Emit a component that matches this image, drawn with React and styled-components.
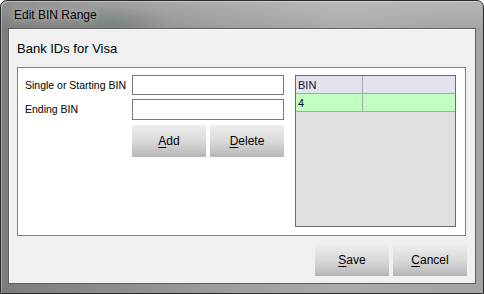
import React from "react";
import styled, { createGlobalStyle } from "styled-components";

const GlobalStyle = createGlobalStyle`
  html, body {
    margin: 0;
    padding: 0;
    background: #ffffff;
  }
  body {
    font-family: "Liberation Sans", Arial, sans-serif;
  }
`;

const Window = styled.div`
  box-sizing: border-box;
  width: 484px;
  height: 294px;
  border: 1px solid #2b2b2b;
  border-radius: 7px 7px 0 0;
  padding: 0 7px 9px 7px;
  display: flex;
  flex-direction: column;
  background:
    radial-gradient(ellipse 60px 16px at 110px 22px, rgba(90, 115, 90, 0.4), transparent),
    linear-gradient(to bottom, rgba(255, 255, 255, 0.18), rgba(255, 255, 255, 0) 30px),
    linear-gradient(to right, #7c7c7c, #8a8a8a 20%, #9c9c9c 45%, #aaaaaa 70%, #a4a4a4);
  box-shadow: inset 1px 1px 0 rgba(255, 255, 255, 0.35);
`;

const TitleBar = styled.div`
  height: 27px;
  display: flex;
  align-items: center;
  padding-left: 6px;
  font-family: "Liberation Sans", Arial, sans-serif;
  font-size: 12px;
  color: #000;
  text-shadow: 0 0 6px rgba(255, 255, 255, 0.7);
`;

const Client = styled.div`
  flex: 1;
  box-sizing: border-box;
  border: 1px solid #5e5e5e;
  background: #f0f0f0;
  box-shadow: inset 1px 1px 0 #ffffff;
  padding: 0 9px 0 8px;
  display: flex;
  flex-direction: column;
`;

const Heading = styled.div`
  height: 37px;
  display: flex;
  align-items: center;
  padding-top: 1px;
  font-size: 13px;
  color: #000;
`;

const Panel = styled.div`
  box-sizing: border-box;
  width: 449px;
  height: 169px;
  border: 1px solid #828282;
  background: #ffffff;
  padding: 7px 8px 7px 7px;
  display: flex;
  gap: 11px;
`;

const Form = styled.div`
  display: grid;
  grid-template-columns: 107px 152px;
  grid-template-rows: 20px 21px 32px;
  row-gap: 4px;
  align-content: start;
`;

const Label = styled.label`
  font-size: 10.5px;
  color: #000;
  display: flex;
  align-items: center;
  padding-bottom: 1px;
`;

const Input = styled.input`
  box-sizing: border-box;
  width: 152px;
  height: 100%;
  border: 1px solid #7a7a7a;
  background: #ffffff;
  outline: none;
  margin: 0;
  font-size: 11px;
`;

const ButtonPair = styled.div`
  grid-column: 2;
  display: flex;
  gap: 4px;
  margin-top: 1px;
`;

const Button = styled.button`
  box-sizing: border-box;
  width: 74px;
  height: 32px;
  border: none;
  margin: 0;
  padding: 0;
  background: linear-gradient(to bottom, #eeeeee 0%, #dadada 50%, #b6b6b6 100%);
  font-family: "Liberation Sans", Arial, sans-serif;
  font-size: 12px;
  color: #000;
  u {
    text-decoration: underline;
    text-underline-offset: 2px;
  }
`;

const Table = styled.div`
  box-sizing: border-box;
  width: 161px;
  height: 152px;
  border: 1px solid #6c6c6c;
  background: #e0e0e0;
  display: flex;
  flex-direction: column;
`;

const Row = styled.div`
  display: grid;
  grid-template-columns: 66px 1fr;
  height: 17px;
  background: ${(p) => p.$bg};
  border-bottom: 1px solid #a8a8a8;
`;

const Cell = styled.div`
  display: flex;
  align-items: center;
  padding-left: 2px;
  font-size: 11px;
  color: #10102a;
  & + & {
    border-left: 1px solid #a8a8a8;
  }
`;

const Footer = styled.div`
  display: flex;
  justify-content: flex-end;
  gap: 4px;
  padding-top: 8px;
  margin-right: -1px;
`;

export default function App() {
  return (
    <>
      <GlobalStyle />
      <Window>
        <TitleBar>Edit BIN Range</TitleBar>
        <Client>
          <Heading>Bank IDs for Visa</Heading>
          <Panel>
            <Form>
              <Label>Single or Starting BIN</Label>
              <Input />
              <Label>Ending BIN</Label>
              <Input />
              <ButtonPair>
                <Button><u>A</u>dd</Button>
                <Button><u>D</u>elete</Button>
              </ButtonPair>
            </Form>
            <Table>
              <Row $bg="#e3e3ef">
                <Cell>BIN</Cell>
                <Cell />
              </Row>
              <Row $bg="#c0ffc0">
                <Cell>4</Cell>
                <Cell />
              </Row>
            </Table>
          </Panel>
          <Footer>
            <Button><u>S</u>ave</Button>
            <Button><u>C</u>ancel</Button>
          </Footer>
        </Client>
      </Window>
    </>
  );
}
